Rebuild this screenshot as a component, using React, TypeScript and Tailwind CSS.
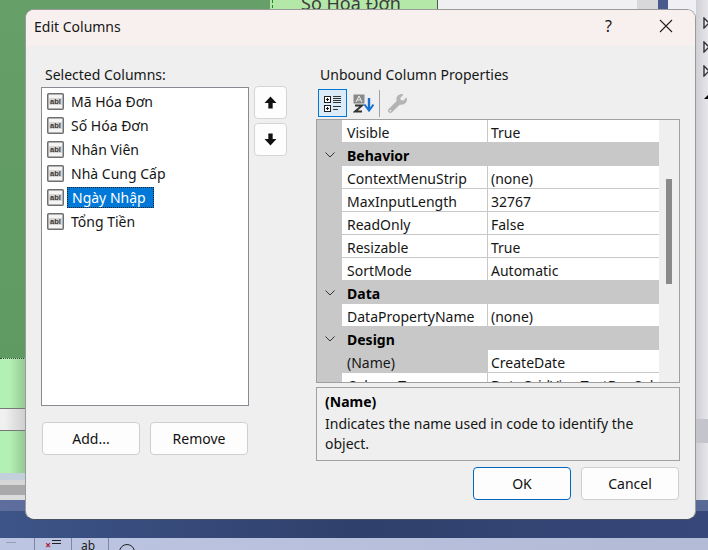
import { FaWrench } from "react-icons/fa";

type Row = { name: string; value?: string; selected?: boolean };

const columns = ["Mã Hóa Đơn", "Số Hóa Đơn", "Nhân Viên", "Nhà Cung Cấp", "Ngày Nhập", "Tổng Tiền"];

const rows: Row[] = [
  { name: "Visible", value: "True" },
  { name: "Behavior" },
  { name: "ContextMenuStrip", value: "(none)" },
  { name: "MaxInputLength", value: "32767" },
  { name: "ReadOnly", value: "False" },
  { name: "Resizable", value: "True" },
  { name: "SortMode", value: "Automatic" },
  { name: "Data" },
  { name: "DataPropertyName", value: "(none)" },
  { name: "Design" },
  { name: "(Name)", value: "CreateDate", selected: true },
  { name: "ColumnType", value: "DataGridViewTextBoxColumn" },
];

const AblIcon = () => (
  <svg width="17" height="17" viewBox="0 0 17 17" className="shrink-0">
    <rect x="0.75" y="0.75" width="15.5" height="15.5" rx="1" fill="#f4f4f4" stroke="#6e6e6e" strokeWidth="1.5" />
    <rect x="2" y="5" width="13" height="7" fill="#d6d6d6" />
    <text x="8.5" y="11" textAnchor="middle" fontSize="7.5" fontWeight="700" fill="#333" fontFamily="'Liberation Sans', sans-serif">
      abl
    </text>
  </svg>
);

const ArrowIcon = ({ down }: { down?: boolean }) => (
  <svg width="13" height="13" viewBox="0 0 12 12" className={down ? "rotate-180" : ""}>
    <path d="M6 0.5 L11.5 6.5 H8 V11.5 H4 V6.5 H0.5 Z" fill="#111" />
  </svg>
);

const CategorizedIcon = () => (
  <svg width="18" height="17" viewBox="0 0 18 17">
    <rect x="0.5" y="1.5" width="6" height="6" fill="#fff" stroke="#222" />
    <path d="M2 4.5h3M3.5 3v3" stroke="#111" />
    <rect x="0.5" y="10.5" width="6" height="6" fill="#fff" stroke="#222" />
    <path d="M2 13.5h3M3.5 12v3" stroke="#111" />
    <path d="M9 1.5h8M9 3.5h8M9 5.5h8M9 7.5h8M9 11.5h8M9 14.5h5" stroke="#333" />
  </svg>
);

const AlphaIcon = () => (
  <svg width="21" height="19" viewBox="0 0 21 19">
    <rect x="0.5" y="0.5" width="11" height="9" fill="#8a8a8a" />
    <path d="M3 8 L6 2 L9 8 M4.2 6h3.6" stroke="#f2f2f2" fill="none" />
    <path d="M2 11.5h7L2 17.5h7" stroke="#333" strokeWidth="2" fill="none" />
    <path d="M16 4v11" stroke="#1671d0" strokeWidth="2.4" />
    <path d="M11.5 10.5 L16 16.5 L20.5 10.5" stroke="#1671d0" strokeWidth="2" fill="none" />
  </svg>
);

const Chevron = () => (
  <svg width="10" height="6" viewBox="0 0 10 6">
    <path d="M0.5 0.5 L5 5 L9.5 0.5" stroke="#333" fill="none" />
  </svg>
);

const OutlineTriangle = () => (
  <svg width="5" height="12" viewBox="0 0 5 12" className="shrink-0">
    <path d="M1 1 L1 11 L6 6 Z" stroke="#333" strokeWidth="1.4" fill="#e8e8ee" />
  </svg>
);

const PushButton = ({ label, primary }: { label: string; primary?: boolean }) => (
  <button
    className={`h-[33px] w-[98px] rounded-[4px] border bg-[#fdfdfd] text-[14px] text-[#111] ${
      primary ? "border-[#0067c0]" : "border-[#cfcfcf]"
    }`}
  >
    {label}
  </button>
);

const ArrowButton = ({ down }: { down?: boolean }) => (
  <button className="flex h-[33px] w-[33px] items-center justify-center rounded-[4px] border border-[#d4d4d4] bg-[#fdfdfd]">
    <ArrowIcon down={down} />
  </button>
);

const PropertyRow = ({ row }: { row: Row }) => {
  if (!row.value) {
    return (
      <div className="flex h-[23px] shrink-0 items-center bg-[#c8c8c8]">
        <div className="flex w-[25px] justify-center">
          <Chevron />
        </div>
        <span className="pl-[5px] pt-px font-bold text-black">{row.name}</span>
      </div>
    );
  }
  return (
    <div className="flex h-[23px] shrink-0 bg-[#c8c8c8]">
      <div className="w-[25px] shrink-0" />
      <div className={`flex h-[22px] w-[145px] items-center pl-[5px] pt-[3px] ${row.selected ? "bg-[#c8c8c8]" : "bg-white"}`}>
        {row.name}
      </div>
      <div className="h-[22px] w-px bg-[#c8c8c8]" />
      <div className="flex h-[22px] flex-1 items-center overflow-hidden whitespace-nowrap bg-white pl-[3px] pt-[3px]">
        {row.value}
      </div>
    </div>
  );
};

const Dialog = () => (
  <div className="absolute left-[25px] top-[9px] h-[511px] w-[671px] overflow-hidden rounded-[9px] border border-[#9a9a9a] border-b-[#4a4f63] bg-[#efefef] text-[14px] text-[#161616]">
    <div className="flex h-[36px] items-center bg-[#f8f0ee] pb-[4px] pl-[8px] pr-[22px]">
      <span className="flex-1">Edit Columns</span>
      <span className="mr-[47px] text-[16px]">?</span>
      <svg width="14" height="14" viewBox="0 0 14 14">
        <path d="M1 1 L13 13 M13 1 L1 13" stroke="#222" strokeWidth="1.1" />
      </svg>
    </div>

    <div className="flex pl-[15px]">
      <div className="w-[208px] pt-[19px]">
        <div className="h-[20px] pl-[4px] leading-[20px]">Selected Columns:</div>
        <div className="mt-[2px] h-[319px] border border-[#8a8a94] bg-white pl-[5px] pt-px">
          {columns.map((c) => (
            <div key={c} className="flex h-[24px] items-center">
              <AblIcon />
              {c === "Ngày Nhập" ? (
                <span className="ml-[3px] flex h-[21px] w-[87px] items-center border border-dotted border-[#222] bg-[#0078d7] px-[4px] text-white">
                  {c}
                </span>
              ) : (
                <span className="ml-[7px]">{c}</span>
              )}
            </div>
          ))}
        </div>
        <div className="mt-[16px] flex gap-[10px] pl-px">
          <PushButton label="Add..." />
          <PushButton label="Remove" />
        </div>
      </div>

      <div className="ml-[5px] flex w-[33px] flex-col gap-[4px] pt-[40px]">
        <ArrowButton />
        <ArrowButton down />
      </div>

      <div className="ml-[29px] w-[364px] pt-[19px]">
        <div className="h-[20px] pl-[4px] leading-[20px]">Unbound Column Properties</div>
        <div className="mt-[4px] flex h-[28px] items-center pl-[2px]">
          <div className="flex h-[28px] w-[29px] items-center justify-center border border-[#0078d7] bg-[#dcebf8]">
            <CategorizedIcon />
          </div>
          <div className="flex w-[32px] justify-center">
            <AlphaIcon />
          </div>
          <div className="h-[27px] w-px bg-[#a0a0a0]" />
          <FaWrench className="ml-[8px] text-[19px] text-[#b4b4b4]" />
        </div>
        <div className="mt-[2px] flex h-[264px] overflow-hidden border border-[#a0a0a0]">
          <div className="flex w-[342px] flex-col">
            {rows.map((r) => (
              <PropertyRow key={r.name} row={r} />
            ))}
          </div>
          <div className="flex-1 pt-[59px]">
            <div className="mx-auto h-[105px] w-[6px] bg-[#8a8a8a]" />
          </div>
        </div>
        <div className="mt-[4px] h-[74px] border border-[#a0a0a0] pl-[8px] pr-[16px] pt-[4px] leading-[20px]">
          <div className="font-bold text-black">(Name)</div>
          <div className="mt-[2px]">Indicates the name used in code to identify the object.</div>
        </div>
        <div className="mt-[6px] flex justify-end gap-[10px] pr-px">
          <PushButton label="OK" primary />
          <PushButton label="Cancel" />
        </div>
      </div>
    </div>
  </div>
);

const Desktop = () => (
  <div className="flex h-[550px] w-[708px] flex-col">
    <div className="flex h-[500px]">
      <div className="flex w-[270px] flex-col">
        <div className="h-[358px] bg-gradient-to-b from-[#669f68] to-[#5f9a63]" />
        <div className="h-[50px] border-t border-dotted border-[#444] bg-[linear-gradient(90deg,#b3f0b3_10px,#95c995_25px)]" />
        <div className="h-[23px] border-y border-[#777] bg-[linear-gradient(90deg,#f0f0f0_5px,#cfcfcf_25px)]" />
        <div className="h-[42px] bg-[linear-gradient(90deg,#b3f0b3_10px,#95c995_25px)]" />
        <div className="h-[7px] bg-[#c3d0dc]" />
        <div className="h-[5px] bg-[#d6d6d6]" />
        <div className="h-[10px] bg-[#a9a9ab]" />
        <div className="h-[5px] bg-[#dcdcdc]" />
      </div>
      <div className="w-[168px] overflow-hidden border-r border-[#555] bg-[#b3e8a8] pl-[2px]">
        <div className="h-full border-l border-dashed border-[#1a8a1a]">
          <div className="-mt-[10px] pl-[28px] font-['Noto_Sans',sans-serif] text-[18px] text-[#3c3c3c]">Số Hóa Đơn</div>
        </div>
      </div>
      <div className="w-[199px] bg-[#f0f0f2]" />
      <div className="w-[21px] bg-[#d8d8da]" />
      <div className="w-[10px] bg-[#4a5a8c]" />
      <div className="flex flex-1 justify-end bg-[#f0f0f4]">
        <div className="flex w-[12px] flex-col items-end bg-gradient-to-r from-[#cfcfd6] to-[#e6e6ea]">
          <div className="h-[17px]" />
          <div className="flex flex-col gap-[12px]">
            <OutlineTriangle />
            <OutlineTriangle />
            <OutlineTriangle />
          </div>
          <div className="mt-[18px] h-0 w-0 border-b-[4px] border-l-[4px] border-b-black border-l-transparent" />
          <div className="mt-[320px] h-[24px] w-full bg-[#c4c4cc]" />
        </div>
      </div>
    </div>
    <div className="h-[11px] bg-gradient-to-r from-[#5d6e9e] to-[#5a6a96]" />
    <div className="h-[27px] bg-gradient-to-r from-[#3d5488] via-[#30406c] to-[#37477a]" />
    <div className="flex h-[12px] items-start overflow-hidden bg-gradient-to-r from-[#bcc5e2] to-[#b3bad6]">
      <div className="w-[34px] pl-[6px] pt-[4px]">
        <div className="h-px w-[10px] bg-[#9aa0b4]" />
      </div>
      <div className="h-full w-px bg-[#7d86a6]" />
      <div className="flex w-[36px] items-start justify-center gap-[1px] pt-[2px] text-[10px] leading-none">
        <span className="font-bold text-[#b01030]">×</span>
        <div className="flex flex-col gap-[2px]">
          <div className="h-px w-[9px] bg-[#222]" />
          <div className="h-px w-[9px] bg-[#222]" />
        </div>
      </div>
      <div className="h-full w-px bg-[#7d86a6]" />
      <div className="w-[36px] pl-[9px] font-['Noto_Sans',sans-serif] text-[12px] leading-[16px] text-[#222]">ab</div>
      <div className="h-full w-px bg-[#7d86a6]" />
      <div className="ml-[10px] mt-[6px] h-[16px] w-[16px] rounded-full border border-[#222]" />
    </div>
  </div>
);

export default function App() {
  return (
    <div className="relative h-[550px] w-[708px] overflow-hidden font-['Noto_Sans',sans-serif]">
      <Desktop />
      <Dialog />
    </div>
  );
}
